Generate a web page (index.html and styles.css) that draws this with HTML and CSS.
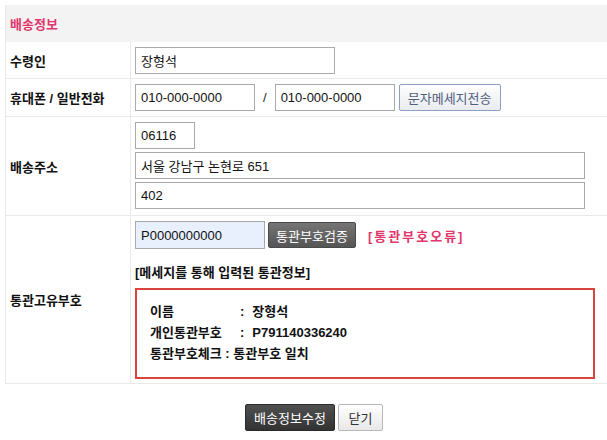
FILE: index.html
```html
<!DOCTYPE html>
<html lang="ko">
<head>
<meta charset="utf-8">
<title>배송정보</title>
<link rel="stylesheet" href="styles.css">
</head>
<body>
<div class="wrap">
  <div class="sheet">
    <div class="head">배송정보</div>
    <div class="row r1">
      <div class="label">수령인</div>
      <div class="val"><input class="inp w200" type="text" value="장형석"></div>
    </div>
    <div class="row r2">
      <div class="label">휴대폰 / 일반전화</div>
      <div class="val">
        <input class="inp w120" type="text" value="010-000-0000">
        <span class="slash">/</span>
        <input class="inp w120" type="text" value="010-000-0000">
        <button class="btn-sms" type="button">문자메세지전송</button>
      </div>
    </div>
    <div class="row r3">
      <div class="label">배송주소</div>
      <div class="val col">
        <input class="inp w60" type="text" value="06116">
        <input class="inp w450" type="text" value="서울 강남구 논현로 651">
        <input class="inp w450" type="text" value="402">
      </div>
    </div>
    <div class="row r4">
      <div class="label">통관고유부호</div>
      <div class="val col">
        <div class="line">
          <input class="inp w130 filled" type="text" value="P0000000000">
          <button class="btn-dark" type="button">통관부호검증</button>
          <span class="err">[통관부호오류]</span>
        </div>
        <div class="subtitle">[메세지를 통해 입력된 통관정보]</div>
        <div class="box">
          <div><span class="k">이름</span>:<span class="v">장형석</span></div>
          <div><span class="k">개인통관부호</span>:<span class="v">P791140336240</span></div>
          <div>통관부호체크 : 통관부호 일치</div>
        </div>
      </div>
    </div>
  </div>
  <div class="actions">
    <button class="btn-main" type="button">배송정보수정</button>
    <button class="btn-close" type="button">닫기</button>
  </div>
</div>
</body>
</html>
```
FILE: styles.css
```css
html, body {
  margin: 0;
  padding: 0;
  overflow: hidden;
  background: #fff;
}
body {
  font-family: "Liberation Sans", "Noto Sans CJK KR", sans-serif;
  font-size: 13px;
  color: #111;
}
.wrap {
  width: 618px;
  padding: 5px 0 0 5px;
}
.sheet {
  border-left: 1px solid #e9e9e9;
}
.head {
  height: 37px;
  background: #f3f3f3;
  color: #e2366c;
  font-weight: bold;
  display: flex;
  align-items: center;
  padding-left: 4px;
}
.row {
  display: grid;
  grid-template-columns: 125px 1fr;
  border-bottom: 1px solid #e9e9e9;
}
.r1 { height: 36px; }
.r2 { height: 37px; }
.r3 { height: 98px; }
.r4 { height: 167px; }
.label {
  border-right: 1px solid #e9e9e9;
  font-weight: bold;
  display: flex;
  align-items: center;
  padding-left: 4px;
}
.val {
  display: flex;
  align-items: center;
  padding-left: 4px;
}
.val.col {
  flex-direction: column;
  align-items: flex-start;
  justify-content: flex-start;
  padding-top: 5px;
}
.r3 .val.col { gap: 3px; }
.inp {
  box-sizing: border-box;
  height: 27px;
  border: 1px solid #a9a9a9;
  padding: 0 5px;
  margin: 0;
  font: 13px "Liberation Sans", "Noto Sans CJK KR", sans-serif;
  color: #111;
  background: #fff;
}
.w60 { width: 60px; }
.w120 { width: 120px; }
.w130 { width: 130px; }
.w200 { width: 200px; }
.w450 { width: 450px; }
.filled {
  background: #e8f0fe;
  height: 28px;
}
.slash {
  margin: 0 8px;
  color: #222;
}
.btn-sms {
  margin-left: 4px;
  height: 27px;
  width: 102px;
  padding: 0;
  border: 1px solid #8e9fc6;
  border-radius: 2px;
  background: linear-gradient(#ffffff, #e9ebef);
  color: #50607e;
  font: 13px "Liberation Sans", "Noto Sans CJK KR", sans-serif;
}
.line {
  display: flex;
  align-items: center;
}
.btn-dark {
  margin-left: 3px;
  height: 26px;
  width: 88px;
  padding: 0;
  border: 1px solid #4a4a4a;
  border-radius: 2px;
  background: linear-gradient(#757575, #555555);
  color: #fff;
  font: 13px "Liberation Sans", "Noto Sans CJK KR", sans-serif;
}
.err {
  margin-left: 12px;
  color: #e2366c;
  font-weight: bold;
  letter-spacing: 2px;
}
.subtitle {
  font-weight: bold;
  line-height: 21px;
  margin-top: 13px;
}
.box {
  box-sizing: border-box;
  width: 460px;
  margin-top: 5px;
  border: 2px solid #d9443c;
  padding: 11px 13px 13px;
  font-weight: bold;
  line-height: 21px;
}
.k {
  display: inline-block;
  width: 90px;
}
.v {
  margin-left: 8px;
}
.actions {
  display: flex;
  justify-content: center;
  gap: 3px;
  margin-top: 20px;
}
.btn-main {
  height: 27px;
  width: 90px;
  padding: 0;
  border: 1px solid #2a2a2a;
  border-radius: 2px;
  background: linear-gradient(#505050, #333333);
  color: #fff;
  font: 13px "Liberation Sans", "Noto Sans CJK KR", sans-serif;
}
.btn-close {
  height: 27px;
  width: 45px;
  padding: 0;
  border: 1px solid #b8b8b8;
  border-radius: 2px;
  background: linear-gradient(#ffffff, #e8e8e8);
  color: #333;
  font: 13px "Liberation Sans", "Noto Sans CJK KR", sans-serif;
}
```
